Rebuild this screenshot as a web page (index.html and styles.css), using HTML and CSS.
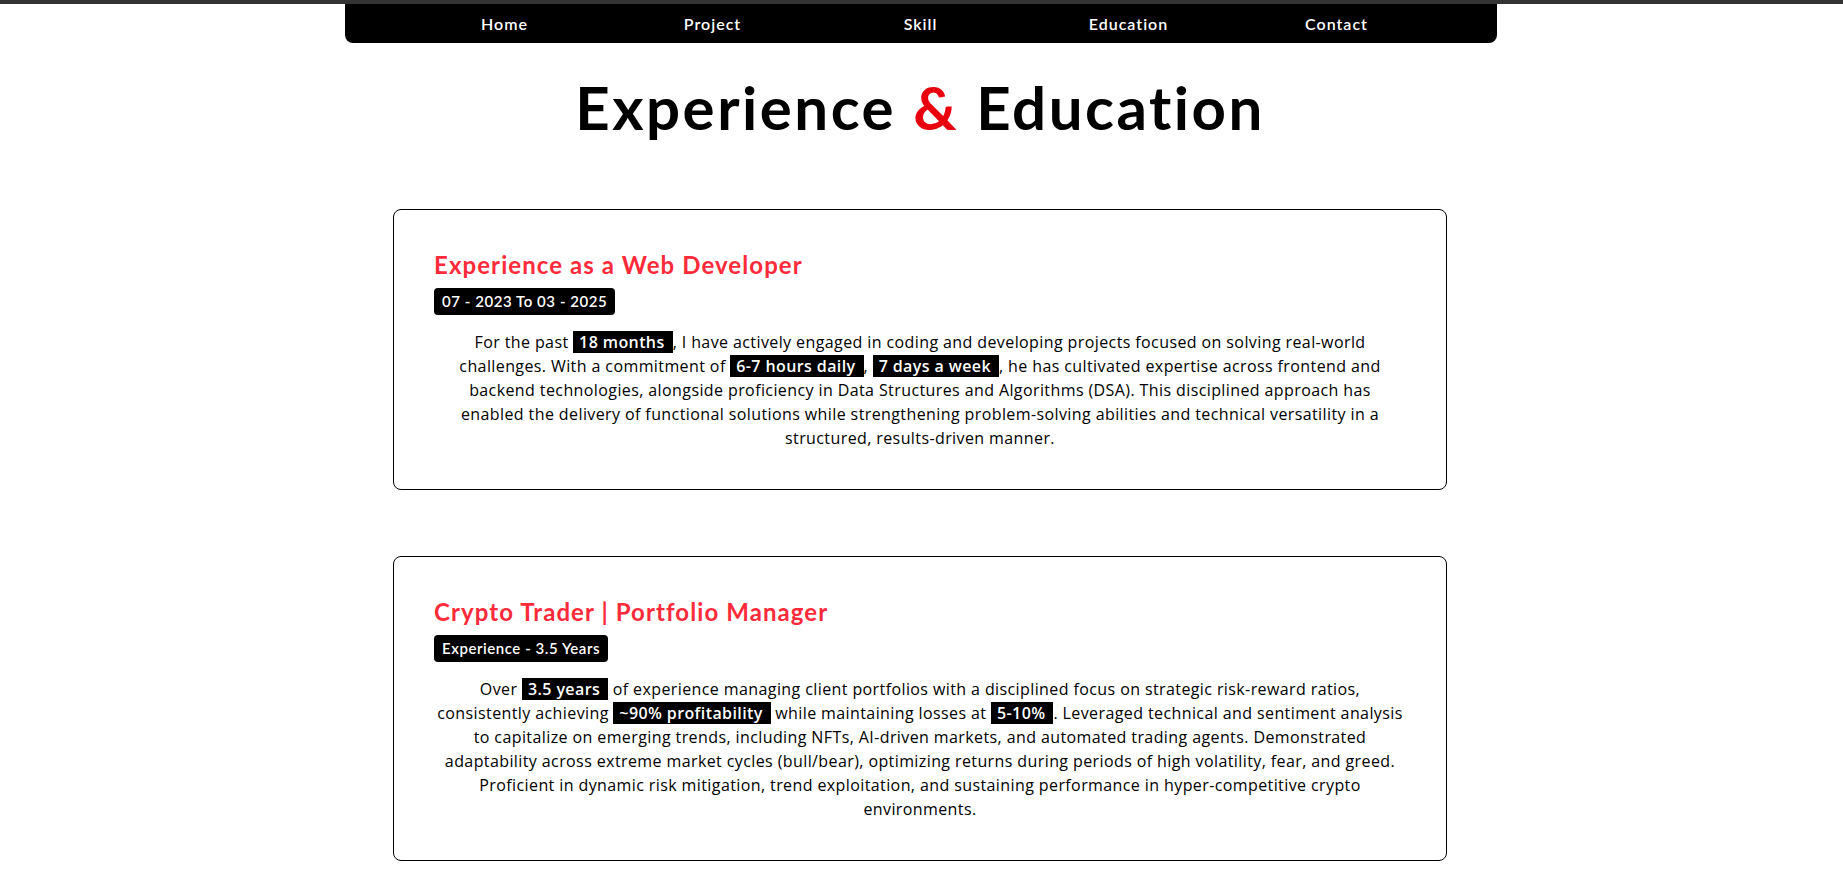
FILE: index.html
```html
<!DOCTYPE html>
<html lang="en">
<head>
<meta charset="utf-8">
<title>Experience &amp; Education</title>
<link rel="stylesheet" href="styles.css">
</head>
<body>
<div class="topbar"></div>
<nav class="nav">
  <ul class="nav-list">
    <li><a href="#">Home</a></li>
    <li><a href="#">Project</a></li>
    <li><a href="#">Skill</a></li>
    <li><a href="#">Education</a></li>
    <li><a href="#">Contact</a></li>
  </ul>
</nav>
<main class="main">
  <h1 class="page-title">Experience <span class="amp">&amp;</span> Education</h1>
  <section class="cards">
    <article class="card">
      <h2 class="card-title">Experience as a Web Developer</h2>
      <span class="badge">07 - 2023 To 03 - 2025</span>
      <p class="card-text">For the past <span class="hl">18 months</span>, I have actively engaged in coding and developing projects focused on solving real-world<br>
challenges. With a commitment of <span class="hl">6-7 hours daily</span>, <span class="hl">7 days a week</span>, he has cultivated expertise across frontend and<br>
backend technologies, alongside proficiency in Data Structures and Algorithms (DSA). This disciplined approach has<br>
enabled the delivery of functional solutions while strengthening problem-solving abilities and technical versatility in a<br>
structured, results-driven manner.</p>
    </article>
    <article class="card">
      <h2 class="card-title">Crypto Trader | Portfolio Manager</h2>
      <span class="badge">Experience - 3.5 Years</span>
      <p class="card-text">Over <span class="hl">3.5 years</span> of experience managing client portfolios with a disciplined focus on strategic risk-reward ratios,<br>
consistently achieving <span class="hl">~90% profitability</span> while maintaining losses at <span class="hl">5-10%</span>. Leveraged technical and sentiment analysis<br>
to capitalize on emerging trends, including NFTs, AI-driven markets, and automated trading agents. Demonstrated<br>
adaptability across extreme market cycles (bull/bear), optimizing returns during periods of high volatility, fear, and greed.<br>
Proficient in dynamic risk mitigation, trend exploitation, and sustaining performance in hyper-competitive crypto<br>
environments.</p>
    </article>
  </section>
</main>
</body>
</html>
```
FILE: styles.css
```css
* { box-sizing: border-box; }
html, body { margin: 0; padding: 0; background: #fff; }
body {
  font-family: Lato, "Noto Sans", Arial, sans-serif;
  color: #000;
}
.topbar {
  height: 4px;
  background: #333333;
}
.nav {
  width: 1152px;
  margin: 0 auto;
  background: #000;
  border-radius: 0 0 8px 8px;
  height: 39px;
  display: flex;
  justify-content: center;
  align-items: center;
  position: relative;
  left: -1px;
}
.nav-list {
  list-style: none;
  margin: 0;
  padding: 0;
  display: grid;
  grid-template-columns: repeat(5, 208px);
  justify-items: center;
}
.nav-list a {
  color: #fff;
  text-decoration: none;
  font-size: 16px;
  font-weight: 600;
  letter-spacing: 1px;
}
.main {
  display: flex;
  flex-direction: column;
  align-items: center;
  padding-right: 3px;
}
.page-title {
  margin: 28px 0 0;
  font-size: 60px;
  line-height: 72px;
  font-weight: 700;
  letter-spacing: 2.5px;
  text-align: center;
}
.amp { color: #e8000f; }
.cards {
  display: flex;
  flex-direction: column;
  gap: 66px;
  margin-top: 66px;
  padding-bottom: 40px;
}
.card {
  width: 1054px;
  border: 1px solid #000;
  border-radius: 8px;
  padding: 40px 40px 39px;
  display: flex;
  flex-direction: column;
  align-items: flex-start;
}
.card-title {
  margin: 0;
  font-size: 24px;
  line-height: 29px;
  font-weight: 700;
  color: #ff2b3b;
  letter-spacing: 1.08px;
}
.badge {
  margin-top: 9px;
  background: #000;
  color: #fff;
  font-size: 15px;
  line-height: 19px;
  padding: 4px 8px;
  border-radius: 4px;
  font-weight: 600;
  letter-spacing: 0.55px;
}
.card-text {
  margin: 15px 0 0;
  width: 100%;
  text-align: center;
  font-family: "Open Sans", Lato, sans-serif;
  font-size: 16px;
  line-height: 24px;
  letter-spacing: 0.4px;
  white-space: nowrap;
}
.hl {
  background: #000;
  color: #fff;
  padding: 0 8px 0 6px;
  font-weight: 600;
}
```
